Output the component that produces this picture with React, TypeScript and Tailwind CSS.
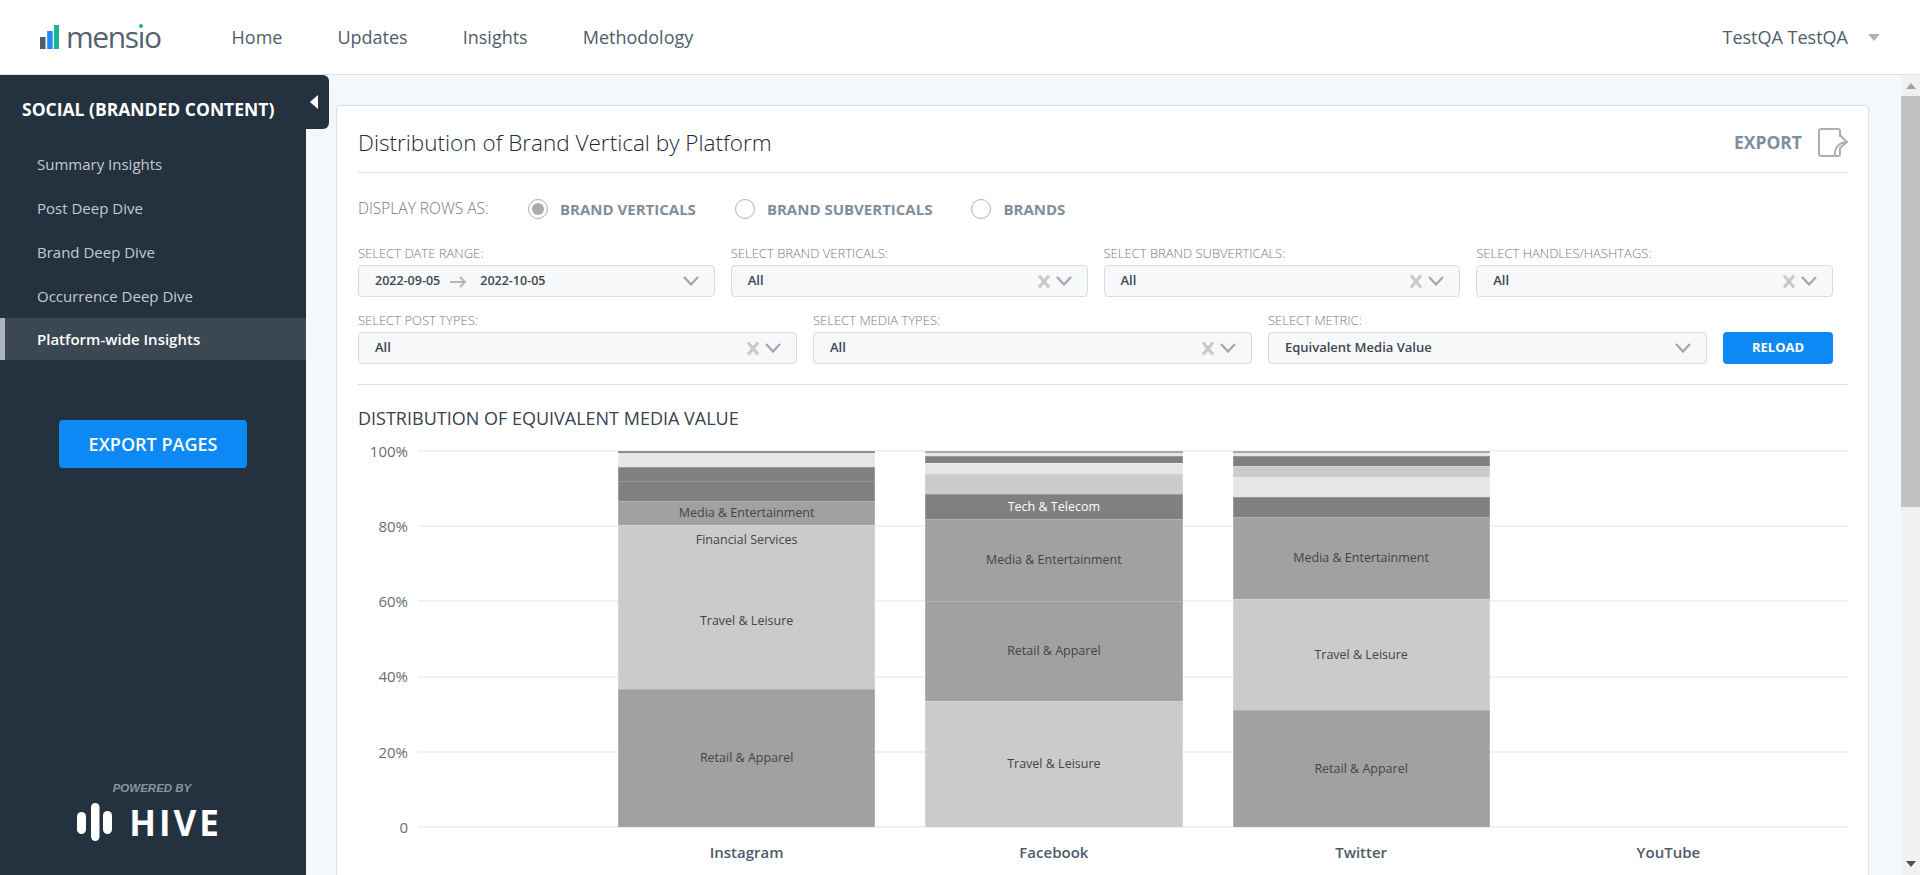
import React from 'react';

const NAV = ['Home', 'Updates', 'Insights', 'Methodology'];
const SIDE = ['Summary Insights', 'Post Deep Dive', 'Brand Deep Dive', 'Occurrence Deep Dive'];

type Seg = { h: number; c: string; label?: string; light?: boolean; flat?: boolean };

const D = 'bg-[#808080]';
const M = 'bg-[#a1a1a1]';
const L = 'bg-[#cbcbcb]';
const XL = 'bg-[#e6e6e6]';

const BARS: { name: string; segs: Seg[] }[] = [
  {
    name: 'Instagram',
    segs: [
      { h: 2, c: D },
      { h: 7, c: XL },
      { h: 7, c: XL },
      { h: 14, c: D },
      { h: 20, c: D },
      { h: 24, c: M, label: 'Media & Entertainment' },
      { h: 29, c: L, label: 'Financial Services' },
      { h: 135, c: L, label: 'Travel & Leisure', flat: true },
      { h: 138, c: M, label: 'Retail & Apparel' },
    ],
  },
  {
    name: 'Facebook',
    segs: [
      { h: 2, c: M },
      { h: 3, c: XL },
      { h: 7, c: D },
      { h: 11, c: XL },
      { h: 20, c: L },
      { h: 25, c: D, label: 'Tech & Telecom', light: true },
      { h: 82, c: M, label: 'Media & Entertainment' },
      { h: 100, c: M, label: 'Retail & Apparel' },
      { h: 126, c: L, label: 'Travel & Leisure' },
    ],
  },
  {
    name: 'Twitter',
    segs: [
      { h: 2, c: M },
      { h: 3, c: XL },
      { h: 10, c: D },
      { h: 11, c: L },
      { h: 20, c: XL },
      { h: 20, c: D },
      { h: 82, c: M, label: 'Media & Entertainment' },
      { h: 111, c: L, label: 'Travel & Leisure' },
      { h: 117, c: M, label: 'Retail & Apparel' },
    ],
  },
  { name: 'YouTube', segs: [] },
];

const Chevron = () => (
  <svg width="16" height="10" viewBox="0 0 16 10" fill="none" stroke="#a3a7ab" strokeWidth="2.2">
    <path d="M1 1l7 7.5L15 1" />
  </svg>
);

const Clear = () => (
  <svg width="12" height="13" viewBox="0 0 12 13" fill="none" stroke="#c8c9cb" strokeWidth="3">
    <path d="M1 .5l10 12M11 .5l-10 12" />
  </svg>
);

const Field = ({ label, children }: { label: string; children: React.ReactNode }) => (
  <div className="flex flex-col">
    <label className="h-[18px] text-[13px] font-light leading-[18px] text-[#6f7c8a]">{label}</label>
    <div className="mt-[3px] flex h-[32px] items-center justify-between rounded-[4px] border border-[#d5dbe2] bg-[#f7f8fa] pl-[16px] pr-[15px]">
      {children}
    </div>
  </div>
);

const Select = ({ label, value, clear = true }: { label: string; value: string; clear?: boolean }) => (
  <Field label={label}>
    <span className="text-[13px] font-semibold text-[#3d4650]">{value}</span>
    <span className="flex items-center gap-[6px]">
      {clear && <Clear />}
      <Chevron />
    </span>
  </Field>
);

const Radio = ({ label, checked }: { label: string; checked?: boolean }) => (
  <div className="flex items-center gap-[12px]">
    <span className="flex h-[20px] w-[20px] items-center justify-center rounded-full border border-[#a9b1b9] bg-white">
      {checked && <span className="h-[12px] w-[12px] rounded-full bg-[#a9adb2]" />}
    </span>
    <span className="text-[15px] font-bold text-[#7f8e9d]">{label}</span>
  </div>
);

const Chart = () => (
  <div className="relative mt-[22px] h-[420px]">
    <div className="flex h-[376px] flex-col justify-between">
      {['100%', '80%', '60%', '40%', '20%', '0'].map(t => (
        <div key={t} className="flex h-0 items-center">
          <span className="w-[50px] text-right text-[15px] text-[#666e77]">{t}</span>
          <span className="ml-[10px] h-[2px] flex-1 bg-[#f0f0f5]" />
        </div>
      ))}
    </div>
    <div className="absolute inset-x-0 top-0 flex pl-[235px] pr-[26px]">
      {BARS.map(b => (
        <div key={b.name} className="flex-1">
          <div className="flex h-[376px] flex-col px-[25px]">
            {b.segs.map((s, i) => (
              <div
                key={i}
                className={`flex items-center justify-center border-x border-white/20 ${s.flat ? '' : 'border-t'} ${s.c}`}
                style={{ height: s.h }}
              >
                {s.label && (
                  <span className={`text-[12.5px] leading-none ${s.light ? 'text-white' : 'text-[#444]'}`}>{s.label}</span>
                )}
              </div>
            ))}
          </div>
          <div className="mt-[14px] text-center text-[15px] font-semibold text-[#4d5b6b]">{b.name}</div>
        </div>
      ))}
    </div>
  </div>
);

export default function App() {
  return (
    <div className="flex h-screen flex-col overflow-hidden bg-white font-['Open_Sans',sans-serif]">
      {/* Header */}
      <header className="flex h-[75px] shrink-0 items-center border-b border-[#dde2e7] bg-white pl-[40px] pr-[40px]">
        <svg width="19" height="24" viewBox="0 0 19 24">
          <rect x="0" y="12" width="5.5" height="12" fill="#515f6d" />
          <rect x="7.2" y="6" width="5.5" height="18" fill="#1b8bf5" />
          <rect x="14" y="0" width="5.5" height="24" fill="#19b68f" />
        </svg>
        <span className="ml-[7px] text-[30px] leading-none tracking-[-1.4px] text-[#55626f]">
          mens
          <span className="relative">
            ı
            <span className="absolute left-[1px] top-[8px] h-[4px] w-[4px] rounded-full bg-[#19b68f]" />
          </span>
          o
        </span>
        <nav className="ml-[71px] flex gap-[55px]">
          {NAV.map(n => (
            <a key={n} className="text-[18px] text-[#4f5d6c]">{n}</a>
          ))}
        </nav>
        <div className="ml-auto flex items-center gap-[20px]">
          <span className="text-[18px] text-[#4f5d6c]">TestQA TestQA</span>
          <span className="h-0 w-0 border-x-[6px] border-t-[7px] border-x-transparent border-t-[#a9b1b9]" />
        </div>
      </header>

      <div className="flex min-h-0 flex-1">
        {/* Sidebar */}
        <aside className="flex w-[306px] shrink-0 flex-col bg-[#24313f]">
          <div className="relative z-10 flex h-[54px] w-[329px] shrink-0 items-center rounded-r-[6px] bg-[#24313f] pl-[22px] pt-[14px]">
            <span className="text-[17.5px] font-bold text-white">SOCIAL (BRANDED CONTENT)</span>
            <span className="absolute right-[11px] top-[20px] h-0 w-0 border-y-[7px] border-r-[8px] border-y-transparent border-r-white" />
          </div>
          <div className="mt-[13px] flex flex-col">
            {SIDE.map(s => (
              <div key={s} className="flex h-[44px] items-center pl-[37px] text-[15px] text-[#c4cad0]">{s}</div>
            ))}
            <div className="flex h-[42px] items-center border-l-[5px] border-[#aab4be] bg-[#3b4753] pl-[32px] text-[15px] font-semibold text-white">
              Platform-wide Insights
            </div>
          </div>
          <button className="mx-auto mt-[60px] h-[48px] w-[188px] rounded-[4px] bg-[#0d89f5] text-[18px] font-semibold text-white">
            EXPORT PAGES
          </button>
          <div className="mt-auto flex flex-col items-center pb-[34px] pr-[2px]">
            <span className="font-['Liberation_Sans',sans-serif] text-[11.5px] font-bold italic leading-[16px] text-[#8d949b]">POWERED BY</span>
            <div className="-ml-[5px] mt-[7px] flex items-center gap-[17px]">
              <svg width="35" height="38" viewBox="0 0 35 38" fill="#fff">
                <rect x="0" y="9" width="9" height="22" rx="4.5" />
                <rect x="14" y="0" width="8.5" height="38" rx="4.2" />
                <rect x="26" y="8" width="9" height="23" rx="4.5" />
              </svg>
              <span className="text-[35px] font-bold leading-none tracking-[3px] text-white">HIVE</span>
            </div>
          </div>
        </aside>

        {/* Main */}
        <main className="min-w-0 flex-1 bg-[#f5f8fb] pl-[30px] pr-[32px] pt-[30px]">
          <div className="h-[900px] rounded-[4px] border border-[#d9e0e8] bg-white pl-[21px] pr-[20px]">
            <div className="flex h-[67px] items-center justify-between border-b border-[#d9dee4] pt-[7px]">
              <h1 className="text-[22.5px] font-light text-[#222b33]">Distribution of Brand Vertical by Platform</h1>
              <div className="flex items-center gap-[16px]">
                <span className="text-[17.5px] font-bold text-[#7f8e9d]">EXPORT</span>
                <svg width="30" height="30" viewBox="0 0 30 30" fill="none" stroke="#aab0b7" strokeWidth="2" strokeLinecap="round" strokeLinejoin="round">
                  <path d="M22 8V3a2 2 0 0 0-2-2H3a2 2 0 0 0-2 2v23a2 2 0 0 0 2 2h13" />
                  <path d="M22 21v5a2 2 0 0 1-2 2h-2" />
                  <path d="M17 28c-1-8 3-13 12-14M23 8l6 6-7 6" />
                </svg>
              </div>
            </div>

            <div className="mt-[25px] flex h-[22px] items-center">
              <span className="w-[170px] text-[15.5px] font-light text-[#6f7c8a]">DISPLAY ROWS AS:</span>
              <div className="flex gap-[39px]">
                <Radio label="BRAND VERTICALS" checked />
                <Radio label="BRAND SUBVERTICALS" />
                <Radio label="BRANDS" />
              </div>
            </div>

            <div className="mr-[15px] mt-[24px] grid grid-cols-4 gap-x-[16px]">
              <Field label="SELECT DATE RANGE:">
                <span className="flex items-center text-[12.5px] font-semibold text-[#3d4650]">
                  2022-09-05
                  <svg className="ml-[10px] mr-[13px] mt-[2px]" width="17" height="12" viewBox="0 0 17 12" fill="none" stroke="#b5b8bb" strokeWidth="2">
                    <path d="M0 6h15M10 1l5 5-5 5" />
                  </svg>
                  2022-10-05
                </span>
                <Chevron />
              </Field>
              <Select label="SELECT BRAND VERTICALS:" value="All" />
              <Select label="SELECT BRAND SUBVERTICALS:" value="All" />
              <Select label="SELECT HANDLES/HASHTAGS:" value="All" />
            </div>

            <div className="mr-[15px] mt-[14px] grid grid-cols-[1fr_1fr_1fr_110px] items-end gap-x-[16px]">
              <Select label="SELECT POST TYPES:" value="All" />
              <Select label="SELECT MEDIA TYPES:" value="All" />
              <Select label="SELECT METRIC:" value="Equivalent Media Value" clear={false} />
              <button className="h-[32px] rounded-[4px] bg-[#0d89f5] text-[13px] font-bold text-white">RELOAD</button>
            </div>

            <div className="mt-[20px] border-t border-[#d9dee4]" />
            <h2 className="mt-[22px] text-[18px] font-medium leading-[22px] text-[#37424e]">DISTRIBUTION OF EQUIVALENT MEDIA VALUE</h2>
            <Chart />
          </div>
        </main>

        {/* Page scrollbar */}
        <div className="flex w-[19px] shrink-0 flex-col items-center bg-[#f1f1f1]">
          <span className="mt-[8px] h-0 w-0 border-x-[5px] border-b-[6px] border-x-transparent border-b-[#a3a3a3]" />
          <span className="mt-[7px] h-[411px] w-full bg-[#c1c1c1]" />
          <span className="mt-auto mb-[8px] h-0 w-0 border-x-[5px] border-t-[6px] border-x-transparent border-t-[#505050]" />
        </div>
      </div>
    </div>
  );
}
